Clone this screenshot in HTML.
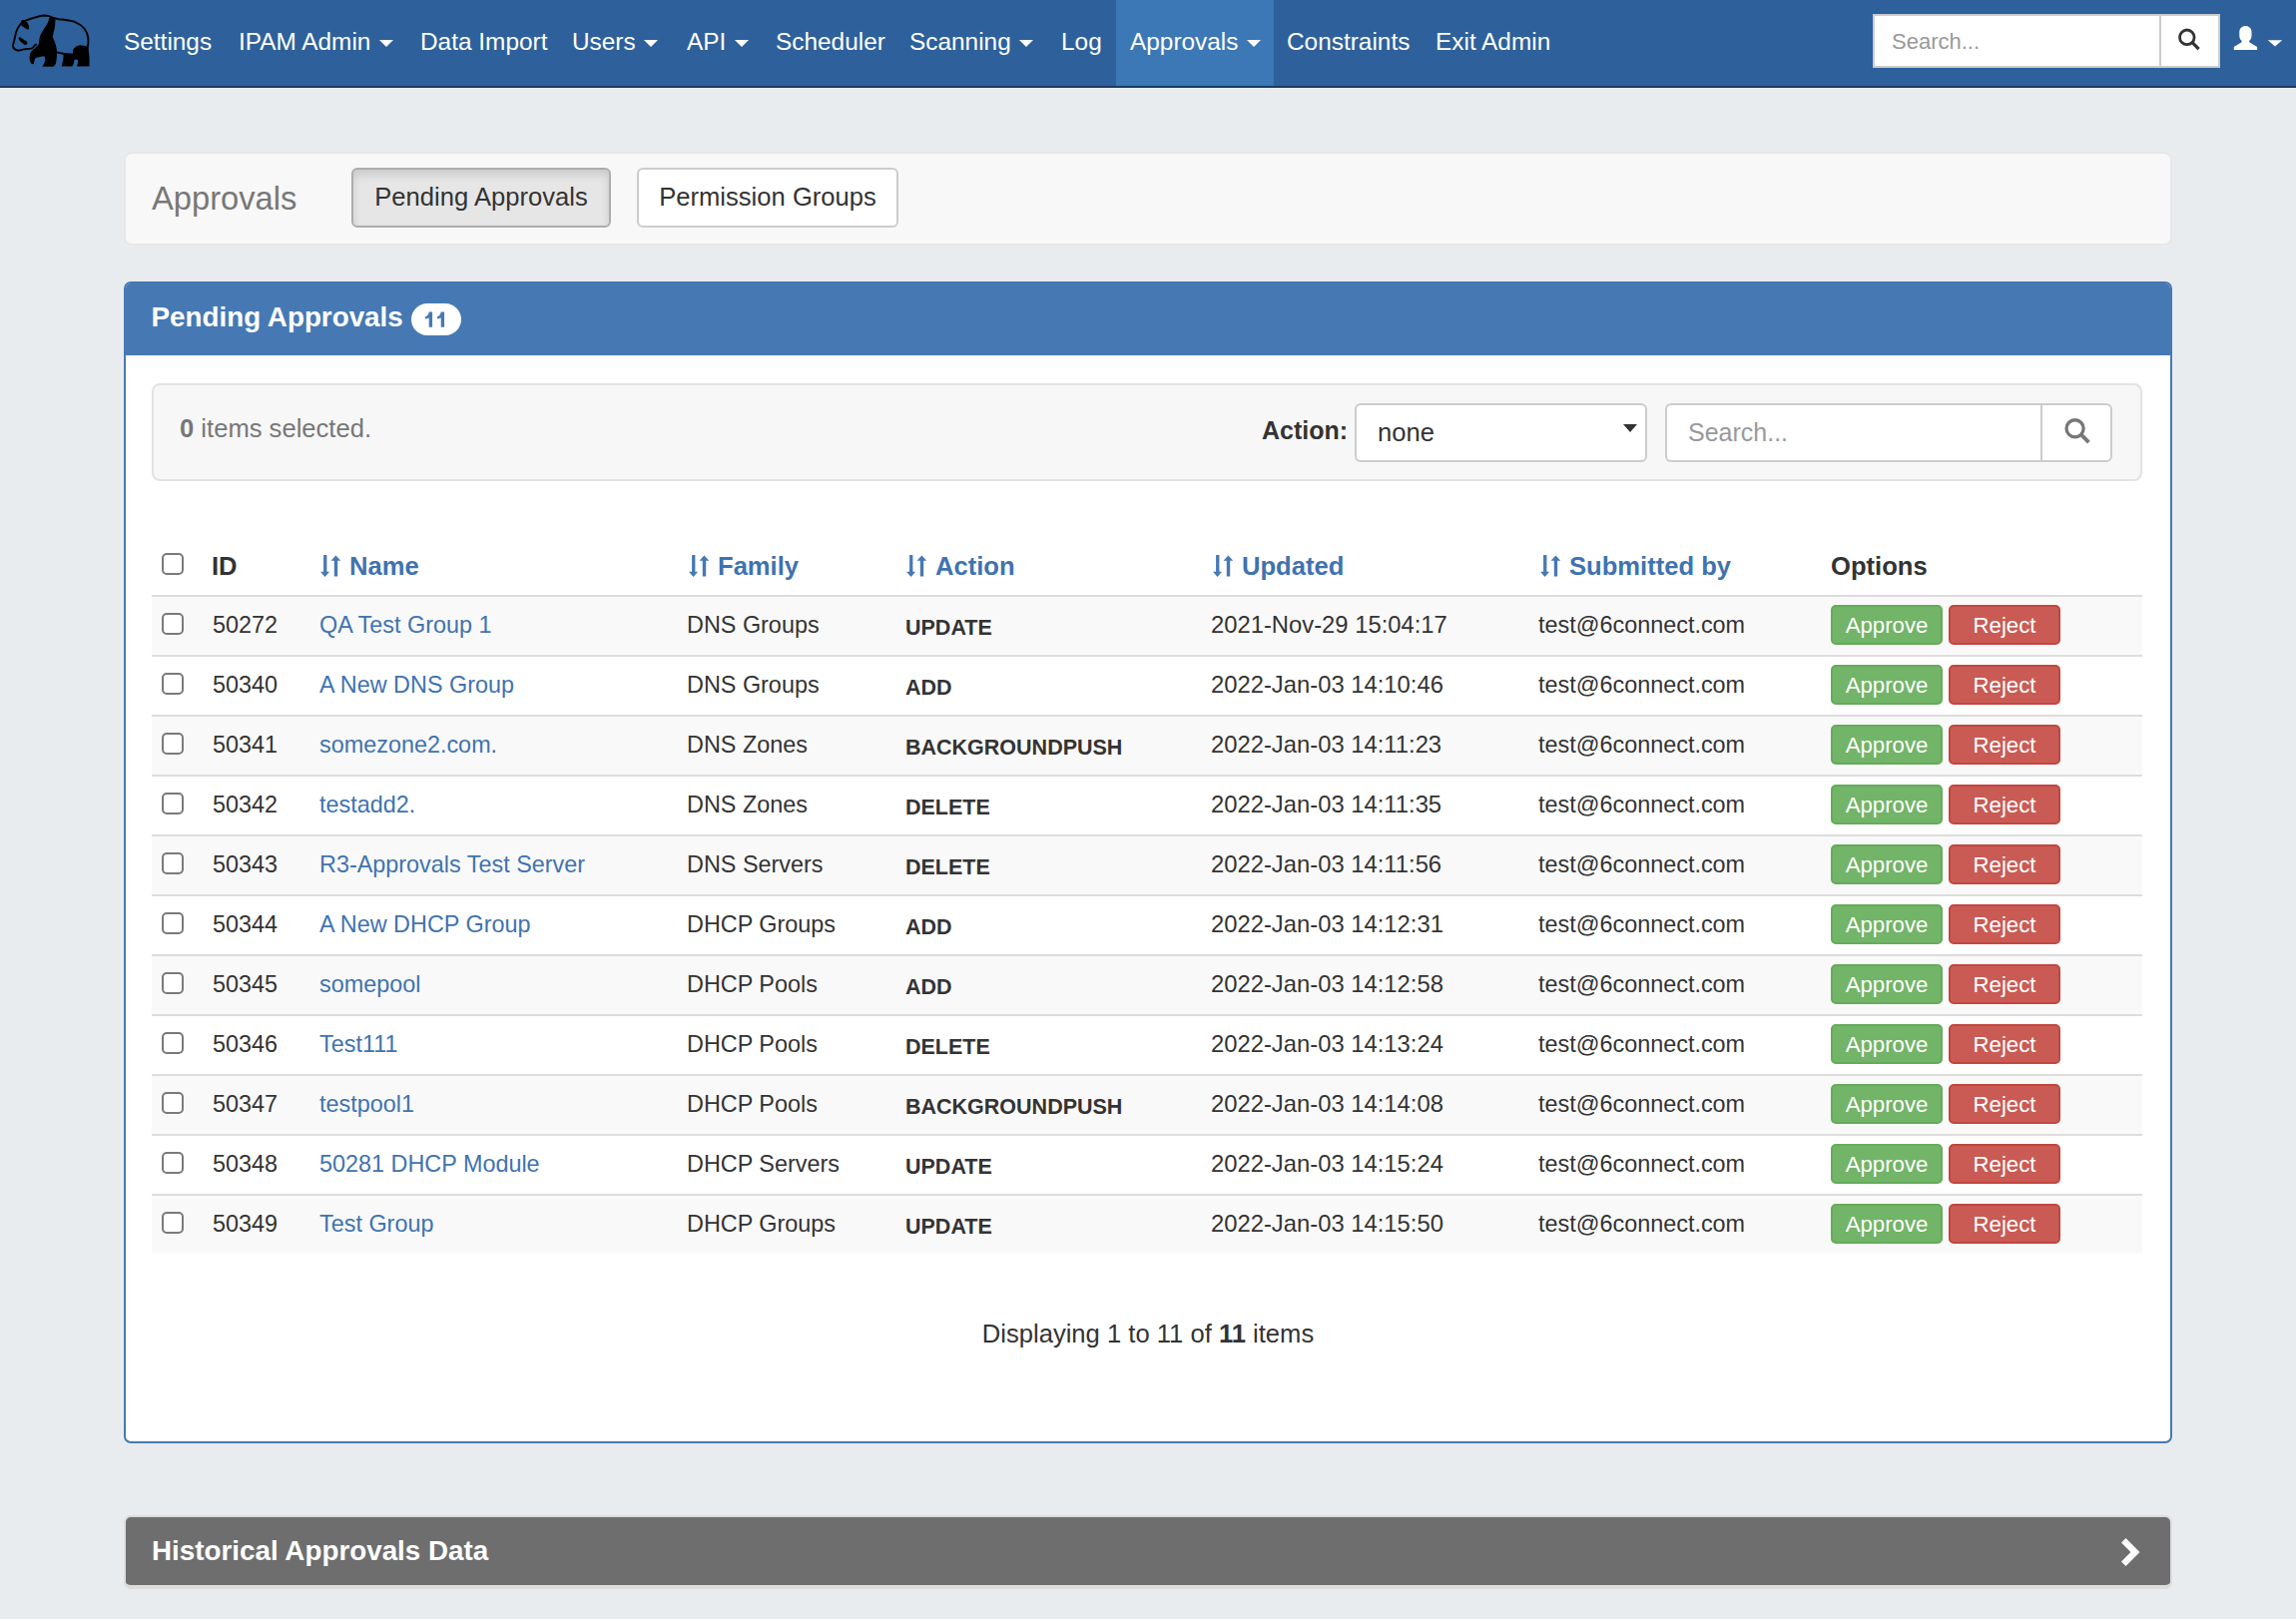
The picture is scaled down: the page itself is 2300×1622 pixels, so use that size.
<!DOCTYPE html>
<html><head><meta charset="utf-8">
<style>
*{box-sizing:border-box;margin:0;padding:0}
html,body{width:2300px;height:1622px;overflow:hidden}
body{background:#e9ecef;font-family:"Liberation Sans",sans-serif;color:#333;position:relative}
.abs{position:absolute}
#nav{position:absolute;left:0;top:0;width:2300px;height:88px;background:#2e619b;border-bottom:2px solid #1b3a64}
#nav .act{position:absolute;left:1118px;top:0;width:158px;height:86px;background:#3c77b6}
#nav .it{position:absolute;top:0;height:86px;line-height:84px;font-size:24.4px;color:#fff;white-space:nowrap}
.caret{display:inline-block;width:0;height:0;border-left:7.5px solid transparent;border-right:7.5px solid transparent;border-top:7.5px solid #fff;vertical-align:middle;position:relative;top:0px;margin-left:2px}
#nsearch{position:absolute;left:1876px;top:14px;width:288px;height:54px;background:#fff;border:2px solid #ccc;border-right:none}
#nsearch span{position:absolute;left:17px;top:0;line-height:52px;font-size:22px;color:#999}
#nbtn{position:absolute;left:2163px;top:14px;width:61px;height:54px;background:#fff;border:2px solid #ccc}
#well1{position:absolute;left:124px;top:152px;width:2052px;height:94px;background:#f8f8f8;border:2px solid #e7e7e7;border-radius:8px}
.btn{position:absolute;border-radius:6px;font-size:25.6px;text-align:center;white-space:nowrap}
#panel{position:absolute;left:124px;top:282px;width:2052px;height:1164px;background:#fff;border:2px solid #4679b3;border-radius:7px;overflow:hidden}
#phead{position:absolute;left:0;top:0;width:100%;height:72px;background:#4679b3}
#well2{position:absolute;left:26px;top:100px;width:1994px;height:98px;background:#f7f7f7;border:2px solid #e3e3e3;border-radius:8px}
.row{position:absolute;left:26px;width:1994px;height:60px;border-top:2px solid #ddd}
.row.s{background:#f9f9f9}
.cell{position:absolute;top:0;line-height:56px;font-size:23.4px;white-space:nowrap}
.lnk{color:#3f73b0}
.up{font-weight:bold;font-size:21.5px;top:2.5px}
.cb{position:absolute;width:22px;height:22px;border:2px solid #7a7a7a;border-radius:5px;background:#fff}
.ba{position:absolute;top:8px;width:112px;height:40px;border-radius:5px;color:#fff;font-size:22.2px;line-height:37px;text-align:center}
.ba.g{left:1682px;background:#72b468;border:2px solid #65ab5a}
.ba.r{left:1800px;background:#c95b54;border:2px solid #c2463f}
.th{position:absolute;top:0;line-height:75px;font-size:25.6px;font-weight:bold;white-space:nowrap}
.sort{position:absolute;top:25px}
#hist{position:absolute;left:124px;top:1518px;width:2052px;height:74px;background:#6e6e6e;border:2px solid #dcdcdc;border-bottom-width:4px;border-radius:7px}
</style></head><body>
<div id="nav">
  <svg class="abs" style="left:8px;top:10px" width="90" height="62" viewBox="0 0 2296 1582">
   <g fill="none" stroke="#000" stroke-width="48" stroke-linecap="round" stroke-linejoin="round">
    <path d="M400 290 C 600 215, 800 140, 950 140 C 1040 142, 1100 170, 1150 200 L 1300 235 C 1450 250, 1600 265, 1700 300 C 1900 380, 2030 520, 2050 720 C 2065 850, 2040 940, 2030 980"/>
    <path d="M350 330 C 260 420, 200 560, 180 690 C 165 760, 150 820, 130 890 C 115 960, 150 1000, 230 1030 C 300 1050, 360 1010, 430 1000 C 520 990, 580 1010, 640 960 C 680 920, 690 880, 720 880"/>
    <path d="M1240 1080 C 1400 1120, 1550 1140, 1680 1130"/>
   </g>
   <g fill="#000">
    <path d="M345 265 C 380 240, 430 255, 470 300 C 510 330, 535 390, 540 450 C 545 495, 500 510, 460 480 C 420 455, 380 430, 345 405 C 325 370, 320 300, 345 265z"/>
    <path d="M292 688 C 330 700, 400 760, 460 790 C 505 815, 505 870, 470 890 C 440 905, 400 880, 360 845 C 320 810, 285 780, 272 735 C 266 710, 275 688, 292 688z"/>
    <path d="M1050 195 L 1210 205 C 1210 300, 1205 400, 1190 480 C 1175 560, 1150 620, 1140 690 C 1180 760, 1220 870, 1245 1000 C 1255 1100, 1250 1250, 1230 1340 C 1215 1410, 1180 1445, 1150 1445 L 880 1445 C 900 1400, 940 1350, 950 1290 C 955 1240, 940 1190, 920 1180 C 860 1190, 780 1210, 720 1220 C 690 1230, 670 1300, 660 1380 C 620 1400, 570 1360, 555 1290 C 540 1200, 560 1090, 620 1030 C 690 970, 760 920, 790 860 C 800 760, 800 700, 840 620 C 900 500, 980 400, 1020 320 C 1040 270, 1050 230, 1050 195z"/>
    <path d="M1260 1080 C 1330 1120, 1390 1140, 1420 1160 C 1410 1250, 1400 1330, 1370 1440 L 1640 1440 C 1680 1410, 1690 1330, 1690 1280 C 1720 1260, 1760 1260, 1790 1290 C 1800 1340, 1770 1400, 1760 1440 L 2080 1440 C 2090 1330, 2080 1150, 2050 960 C 2000 920, 1920 900, 1850 900 C 1760 905, 1680 960, 1660 1040 C 1655 1080, 1660 1110, 1670 1130 C 1560 1140, 1420 1130, 1260 1080z"/>
   </g>
  </svg>
  <div class="act"></div>
  <div class="it" style="left:124px">Settings</div>
  <div class="it" style="left:239px">IPAM Admin <span class="caret"></span></div>
  <div class="it" style="left:421px">Data Import</div>
  <div class="it" style="left:573px">Users <span class="caret"></span></div>
  <div class="it" style="left:688px">API <span class="caret"></span></div>
  <div class="it" style="left:777px">Scheduler</div>
  <div class="it" style="left:911px">Scanning <span class="caret"></span></div>
  <div class="it" style="left:1063px">Log</div>
  <div class="it" style="left:1132px">Approvals <span class="caret"></span></div>
  <div class="it" style="left:1289px">Constraints</div>
  <div class="it" style="left:1438px">Exit Admin</div>
  <div id="nsearch"><span>Search...</span></div>
  <div id="nbtn"></div>
  <svg class="abs" style="left:2170px;top:20px" width="125" height="40" viewBox="2170 20 125 40">
    <circle cx="2190.8" cy="37.3" r="7.3" fill="none" stroke="#333" stroke-width="2.8"/>
    <path d="M2196.2 42.7L2202.6 49.1" stroke="#333" stroke-width="3.3"/>
    <path fill="#fff" d="M2243.3 32C2243.3 28.5 2246 26.1 2249.4 26.1C2252.8 26.1 2255.5 28.5 2255.5 32L2255.5 35.5C2255.5 38.5 2254.5 40 2253.2 40.8L2253.2 42.2L2261.1 47L2261.1 50.1L2237.8 50.1L2237.8 47L2245.6 42.2L2245.6 40.8C2244.3 40 2243.3 38.5 2243.3 35.5Z"/>
    <path fill="#fff" d="M2271.8 40.3H2286.2L2279 46.5Z"/>
  </svg>
</div>

<div id="well1">
  <div class="abs" style="left:26px;top:0;line-height:90px;font-size:32.7px;color:#777">Approvals</div>
  <div class="btn" style="left:226px;top:14px;width:260px;height:60px;background:#e6e6e6;border:2px solid #adadad;box-shadow:inset 0 5px 8px rgba(0,0,0,.125);line-height:54px">Pending Approvals</div>
  <div class="btn" style="left:512px;top:14px;width:262px;height:60px;background:#fff;border:2px solid #ccc;line-height:54px">Permission Groups</div>
</div>

<div id="panel">
  <div id="phead">
    <div class="abs" style="left:25.5px;top:-2px;line-height:72px;font-size:27.8px;font-weight:bold;color:#fff">Pending Approvals</div>
    <div class="abs" style="left:286px;top:20px;width:50px;height:32px;border-radius:16px;background:#fff"><svg class="abs" style="left:0;top:0" width="50" height="32" viewBox="412 304 50 32"><path fill="#4679b3" d="M429.7 312.6H433.1V327.8H429.7V318.6C428.9 319.1 427.4 319.4 426 319.4V317.2C427.9 317 429.3 315.6 429.7 312.6Z M441.7 312.6H445.1V327.8H441.7V318.6C440.9 319.1 439.4 319.4 438 319.4V317.2C439.9 317 441.3 315.6 441.7 312.6Z"/></svg></div>
  </div>
  <div id="well2">
    <div class="abs" style="left:26px;top:0;line-height:86px;font-size:25.6px;color:#777"><b>0</b> items selected.</div>
    <div class="abs" style="left:1110px;top:2px;line-height:86px;font-size:25px;font-weight:bold;color:#333">Action:</div>
    <div class="abs" style="left:1203px;top:18px;width:293px;height:59px;background:#fff;border:2px solid #ccc;border-radius:6px">
      <span class="abs" style="left:21px;top:0;line-height:54px;font-size:25.6px;color:#333">none</span>
      <span class="abs" style="left:267px;top:19px;width:0;height:0;border-left:7px solid transparent;border-right:7px solid transparent;border-top:8px solid #333"></span>
    </div>
    <div class="abs" style="left:1514px;top:18px;width:378px;height:59px;background:#fff;border:2px solid #ccc;border-right:none;border-radius:6px 0 0 6px">
      <span class="abs" style="left:21px;top:0;line-height:54px;font-size:25px;color:#999">Search...</span>
    </div>
    <div class="abs" style="left:1890px;top:18px;width:72px;height:59px;background:#fff;border:2px solid #ccc;border-radius:0 6px 6px 0">
    </div>
  </div>
  <div class="abs" style="left:0;top:1037px;width:100%;text-align:center;font-size:25.6px;line-height:30px;color:#333">Displaying 1 to 11 of <b>11</b> items</div>
  <div class="hdr abs" style="left:26px;top:246px;width:1990px;height:66px">
<div class="cb" style="left:10px;top:24px"></div>
<div class="th" style="left:60px">ID</div>
<svg class="sort" style="left:168px" viewBox="0 0 22 24" width="22" height="24"><path d="M4.1 1.1H7.4V17.7H10.1L5.6 22.9L1 17.7H4.1Z M14.8 22.6H18.2V6.8H21.3L16.4 1.4L11.5 6.8H14.8Z" fill="#4679b3"/></svg><div class="th lnk" style="left:198px">Name</div>
<svg class="sort" style="left:537px" viewBox="0 0 22 24" width="22" height="24"><path d="M4.1 1.1H7.4V17.7H10.1L5.6 22.9L1 17.7H4.1Z M14.8 22.6H18.2V6.8H21.3L16.4 1.4L11.5 6.8H14.8Z" fill="#4679b3"/></svg><div class="th lnk" style="left:567px">Family</div>
<svg class="sort" style="left:755px" viewBox="0 0 22 24" width="22" height="24"><path d="M4.1 1.1H7.4V17.7H10.1L5.6 22.9L1 17.7H4.1Z M14.8 22.6H18.2V6.8H21.3L16.4 1.4L11.5 6.8H14.8Z" fill="#4679b3"/></svg><div class="th lnk" style="left:785px">Action</div>
<svg class="sort" style="left:1062px" viewBox="0 0 22 24" width="22" height="24"><path d="M4.1 1.1H7.4V17.7H10.1L5.6 22.9L1 17.7H4.1Z M14.8 22.6H18.2V6.8H21.3L16.4 1.4L11.5 6.8H14.8Z" fill="#4679b3"/></svg><div class="th lnk" style="left:1092px">Updated</div>
<svg class="sort" style="left:1390px" viewBox="0 0 22 24" width="22" height="24"><path d="M4.1 1.1H7.4V17.7H10.1L5.6 22.9L1 17.7H4.1Z M14.8 22.6H18.2V6.8H21.3L16.4 1.4L11.5 6.8H14.8Z" fill="#4679b3"/></svg><div class="th lnk" style="left:1420px">Submitted by</div>
<div class="th" style="left:1682px">Options</div>
</div>
<div class="row s" style="top:312px">
<div class="cb" style="left:10px;top:16px"></div>
<div class="cell" style="left:61px">50272</div>
<div class="cell lnk" style="left:168px">QA Test Group 1</div>
<div class="cell" style="left:536px">DNS Groups</div>
<div class="cell up" style="left:755px">UPDATE</div>
<div class="cell" style="left:1061px;font-size:23.8px">2021-Nov-29 15:04:17</div>
<div class="cell" style="left:1389px">test@6connect.com</div>
<div class="ba g">Approve</div><div class="ba r">Reject</div>
</div>
<div class="row" style="top:372px">
<div class="cb" style="left:10px;top:16px"></div>
<div class="cell" style="left:61px">50340</div>
<div class="cell lnk" style="left:168px">A New DNS Group</div>
<div class="cell" style="left:536px">DNS Groups</div>
<div class="cell up" style="left:755px">ADD</div>
<div class="cell" style="left:1061px;font-size:23.8px">2022-Jan-03 14:10:46</div>
<div class="cell" style="left:1389px">test@6connect.com</div>
<div class="ba g">Approve</div><div class="ba r">Reject</div>
</div>
<div class="row s" style="top:432px">
<div class="cb" style="left:10px;top:16px"></div>
<div class="cell" style="left:61px">50341</div>
<div class="cell lnk" style="left:168px">somezone2.com.</div>
<div class="cell" style="left:536px">DNS Zones</div>
<div class="cell up" style="left:755px">BACKGROUNDPUSH</div>
<div class="cell" style="left:1061px;font-size:23.8px">2022-Jan-03 14:11:23</div>
<div class="cell" style="left:1389px">test@6connect.com</div>
<div class="ba g">Approve</div><div class="ba r">Reject</div>
</div>
<div class="row" style="top:492px">
<div class="cb" style="left:10px;top:16px"></div>
<div class="cell" style="left:61px">50342</div>
<div class="cell lnk" style="left:168px">testadd2.</div>
<div class="cell" style="left:536px">DNS Zones</div>
<div class="cell up" style="left:755px">DELETE</div>
<div class="cell" style="left:1061px;font-size:23.8px">2022-Jan-03 14:11:35</div>
<div class="cell" style="left:1389px">test@6connect.com</div>
<div class="ba g">Approve</div><div class="ba r">Reject</div>
</div>
<div class="row s" style="top:552px">
<div class="cb" style="left:10px;top:16px"></div>
<div class="cell" style="left:61px">50343</div>
<div class="cell lnk" style="left:168px">R3-Approvals Test Server</div>
<div class="cell" style="left:536px">DNS Servers</div>
<div class="cell up" style="left:755px">DELETE</div>
<div class="cell" style="left:1061px;font-size:23.8px">2022-Jan-03 14:11:56</div>
<div class="cell" style="left:1389px">test@6connect.com</div>
<div class="ba g">Approve</div><div class="ba r">Reject</div>
</div>
<div class="row" style="top:612px">
<div class="cb" style="left:10px;top:16px"></div>
<div class="cell" style="left:61px">50344</div>
<div class="cell lnk" style="left:168px">A New DHCP Group</div>
<div class="cell" style="left:536px">DHCP Groups</div>
<div class="cell up" style="left:755px">ADD</div>
<div class="cell" style="left:1061px;font-size:23.8px">2022-Jan-03 14:12:31</div>
<div class="cell" style="left:1389px">test@6connect.com</div>
<div class="ba g">Approve</div><div class="ba r">Reject</div>
</div>
<div class="row s" style="top:672px">
<div class="cb" style="left:10px;top:16px"></div>
<div class="cell" style="left:61px">50345</div>
<div class="cell lnk" style="left:168px">somepool</div>
<div class="cell" style="left:536px">DHCP Pools</div>
<div class="cell up" style="left:755px">ADD</div>
<div class="cell" style="left:1061px;font-size:23.8px">2022-Jan-03 14:12:58</div>
<div class="cell" style="left:1389px">test@6connect.com</div>
<div class="ba g">Approve</div><div class="ba r">Reject</div>
</div>
<div class="row" style="top:732px">
<div class="cb" style="left:10px;top:16px"></div>
<div class="cell" style="left:61px">50346</div>
<div class="cell lnk" style="left:168px">Test111</div>
<div class="cell" style="left:536px">DHCP Pools</div>
<div class="cell up" style="left:755px">DELETE</div>
<div class="cell" style="left:1061px;font-size:23.8px">2022-Jan-03 14:13:24</div>
<div class="cell" style="left:1389px">test@6connect.com</div>
<div class="ba g">Approve</div><div class="ba r">Reject</div>
</div>
<div class="row s" style="top:792px">
<div class="cb" style="left:10px;top:16px"></div>
<div class="cell" style="left:61px">50347</div>
<div class="cell lnk" style="left:168px">testpool1</div>
<div class="cell" style="left:536px">DHCP Pools</div>
<div class="cell up" style="left:755px">BACKGROUNDPUSH</div>
<div class="cell" style="left:1061px;font-size:23.8px">2022-Jan-03 14:14:08</div>
<div class="cell" style="left:1389px">test@6connect.com</div>
<div class="ba g">Approve</div><div class="ba r">Reject</div>
</div>
<div class="row" style="top:852px">
<div class="cb" style="left:10px;top:16px"></div>
<div class="cell" style="left:61px">50348</div>
<div class="cell lnk" style="left:168px">50281 DHCP Module</div>
<div class="cell" style="left:536px">DHCP Servers</div>
<div class="cell up" style="left:755px">UPDATE</div>
<div class="cell" style="left:1061px;font-size:23.8px">2022-Jan-03 14:15:24</div>
<div class="cell" style="left:1389px">test@6connect.com</div>
<div class="ba g">Approve</div><div class="ba r">Reject</div>
</div>
<div class="row s" style="top:912px">
<div class="cb" style="left:10px;top:16px"></div>
<div class="cell" style="left:61px">50349</div>
<div class="cell lnk" style="left:168px">Test Group</div>
<div class="cell" style="left:536px">DHCP Groups</div>
<div class="cell up" style="left:755px">UPDATE</div>
<div class="cell" style="left:1061px;font-size:23.8px">2022-Jan-03 14:15:50</div>
<div class="cell" style="left:1389px">test@6connect.com</div>
<div class="ba g">Approve</div><div class="ba r">Reject</div>
</div>
</div>

<svg class="abs" style="left:2060px;top:410px" width="40" height="40" viewBox="2060 410 40 40"><circle cx="2078.6" cy="429.3" r="8.55" fill="none" stroke="#777" stroke-width="3.3"/><path d="M2085 435.7L2092.4 443.1" stroke="#777" stroke-width="3.8"/></svg>
<div id="hist">
  <div class="abs" style="left:26px;top:-1px;line-height:70px;font-size:27.8px;font-weight:bold;color:#fff">Historical Approvals Data</div>
  <svg class="abs" style="left:1998px;top:21px" width="20" height="28" viewBox="0 0 20 28"><path d="M1 4.5L5.5 0 19.5 14 5.5 28 1 23.5 10.5 14z" fill="#fff"/></svg>
</div>
</body></html>
